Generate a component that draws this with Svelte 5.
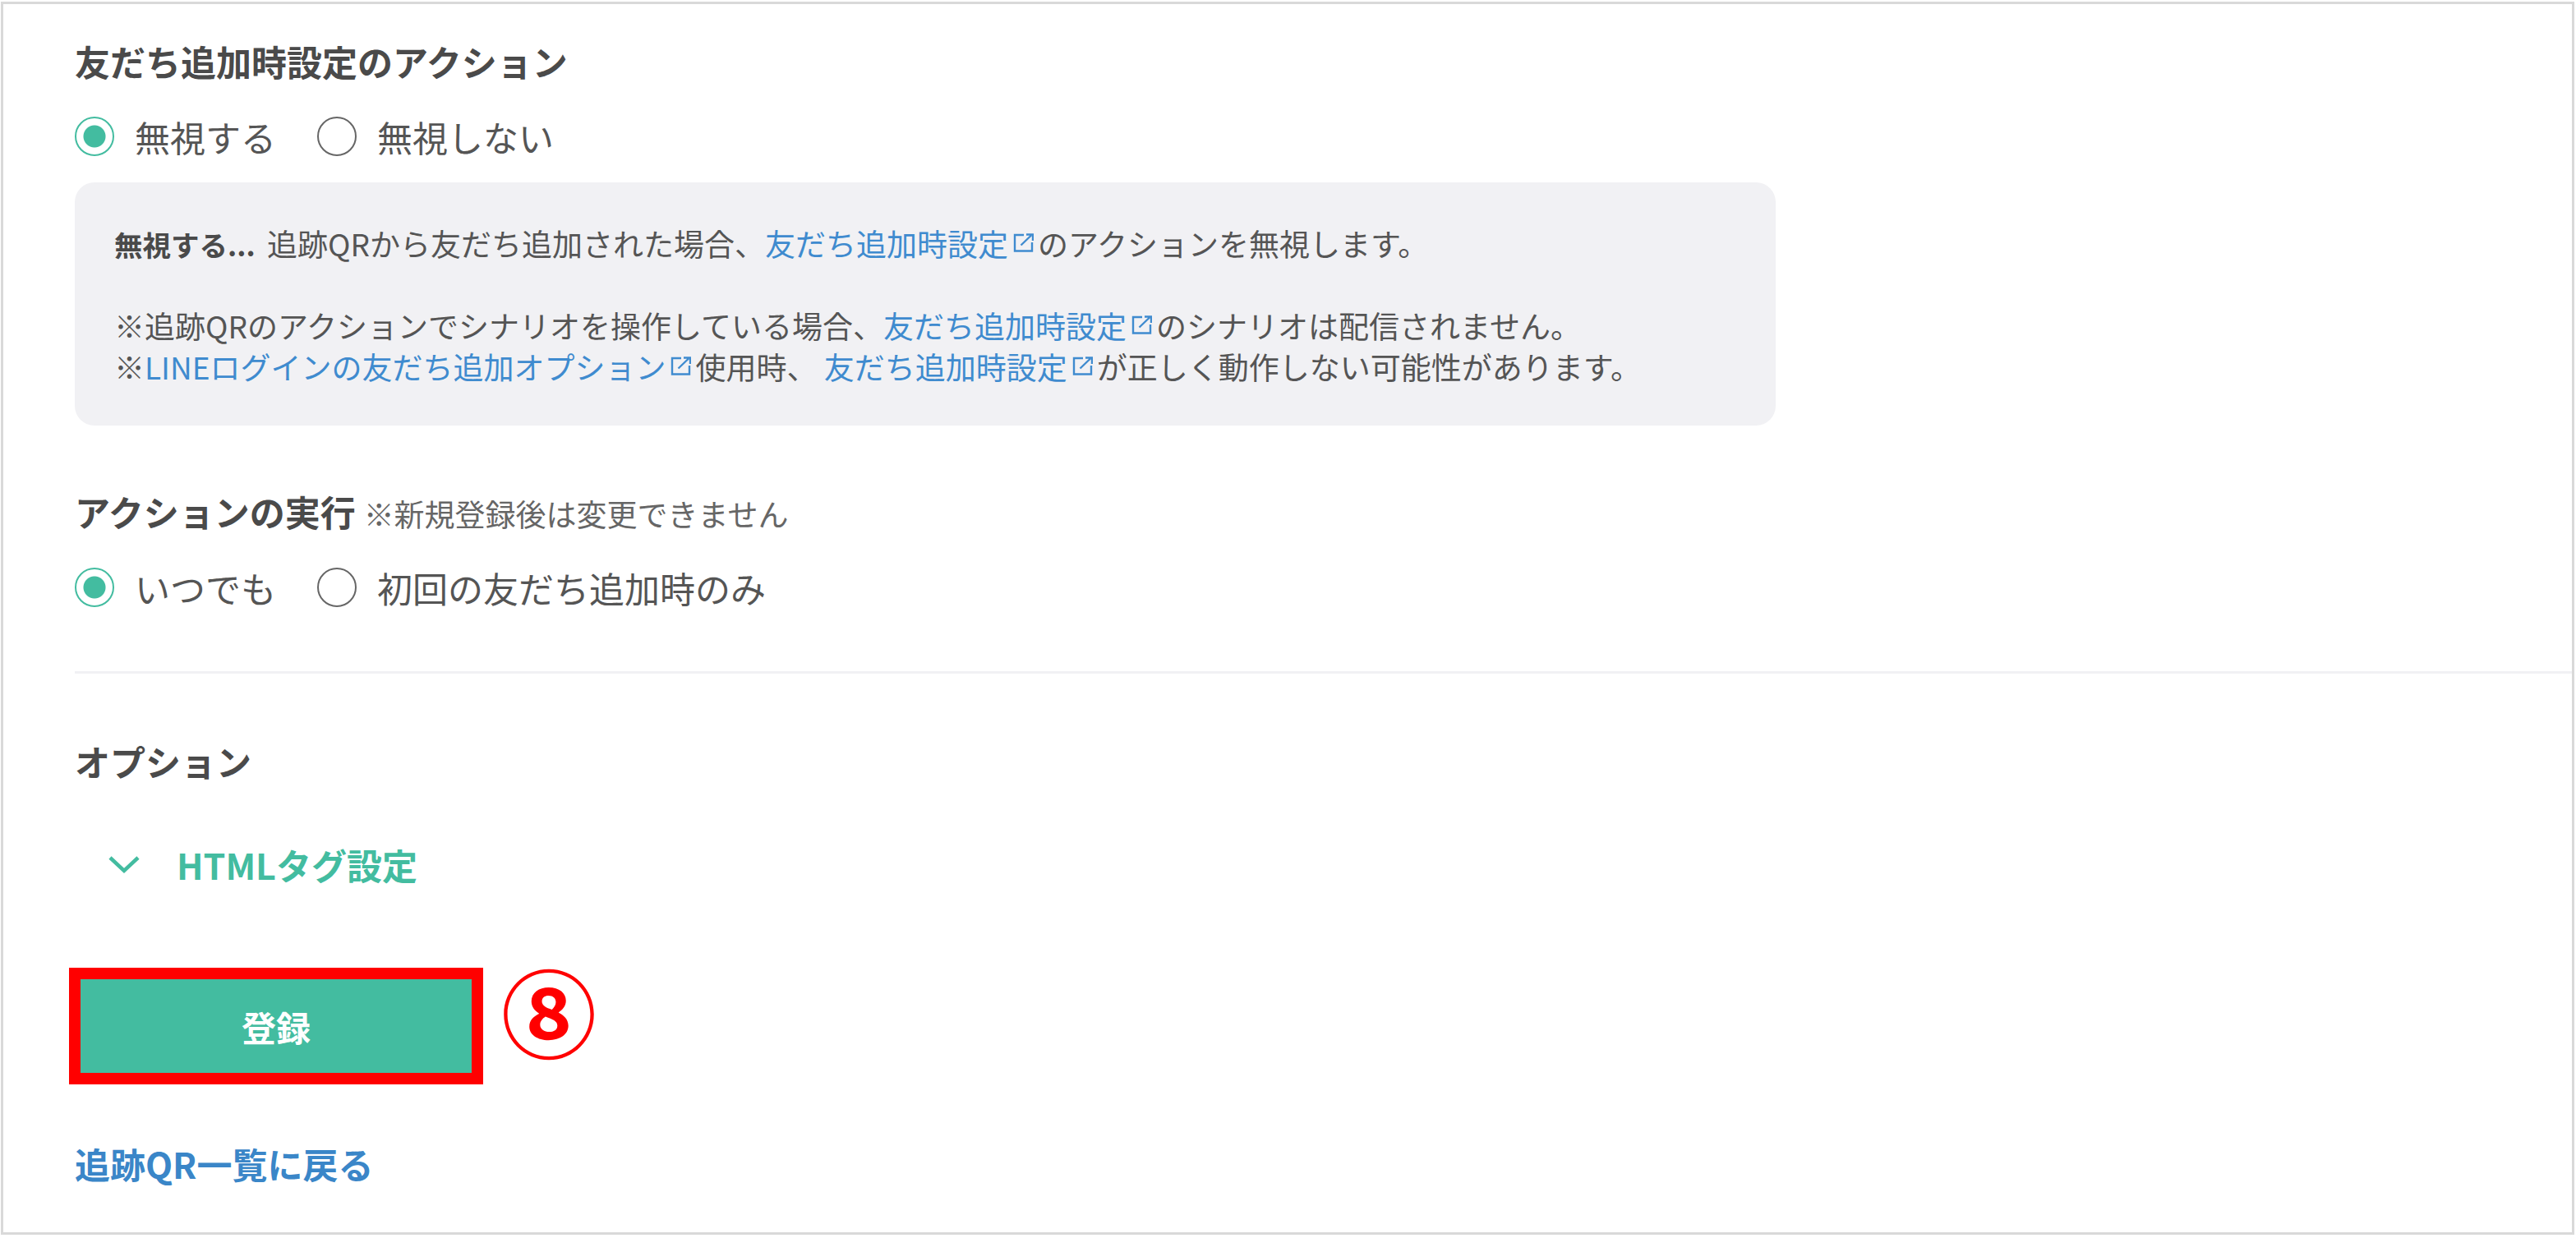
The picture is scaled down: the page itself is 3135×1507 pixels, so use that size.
<script lang="ts">
  let ignore = $state('ignore');
  let timing = $state('always');
  let htmlOpen = $state(false);

  const friendLink = '友だち追加時設定';
</script>

{#snippet ext()}
  <svg class="ext" viewBox="0 0 25 23" fill="none" stroke="currentColor" stroke-width="2.4">
    <path d="M13 2H2v19.5h21V11" />
    <path d="M9.5 14.5 22 2.5M16 1.5H24V9" />
  </svg>
{/snippet}

{#snippet radio(group, value, label)}
  <button type="button" class="radio" onclick={() => group(value)}>
    <span class="dot" class:on={label.checked}></span>
    <span>{label.text}</span>
  </button>
{/snippet}

<div class="frame">
  <h3 class="title">友だち追加時設定のアクション</h3>
  <div class="radios top">
    {@render radio((v) => (ignore = v), 'ignore', { text: '無視する', checked: ignore === 'ignore' })}
    {@render radio((v) => (ignore = v), 'keep', { text: '無視しない', checked: ignore === 'keep' })}
  </div>

  <div class="info">
    <p><strong>無視する...</strong> 追跡QRから友だち追加された場合、<a href="#top">{friendLink}{@render ext()}</a>のアクションを無視します。</p>
    <p class="notes">
      ※追跡QRのアクションでシナリオを操作している場合、<a href="#top">{friendLink}{@render ext()}</a>のシナリオは配信されません。<br />
      ※<a href="#top">LINEログインの友だち追加オプション{@render ext()}</a>使用時、 <a href="#top">{friendLink}{@render ext()}</a>が正しく動作しない可能性があります。
    </p>
  </div>

  <h3 class="title second">アクションの実行 <small>※新規登録後は変更できません</small></h3>
  <div class="radios">
    {@render radio((v) => (timing = v), 'always', { text: 'いつでも', checked: timing === 'always' })}
    {@render radio((v) => (timing = v), 'once', { text: '初回の友だち追加時のみ', checked: timing === 'once' })}
  </div>

  <hr />

  <h3 class="title option">オプション</h3>
  <button type="button" class="toggle" onclick={() => (htmlOpen = !htmlOpen)}>
    <svg viewBox="0 0 40 24" fill="none" stroke="currentColor" stroke-width="4.5">
      <path d="M3 4 20 20 37 4" />
    </svg>
    HTMLタグ設定
  </button>

  <div class="actions">
    <button type="button" class="submit">登録</button>
    <span class="step">⑧</span>
  </div>

  <a class="back" href="#top">追跡QR一覧に戻る</a>
</div>

<style>
  :global(body) {
    margin: 0;
    background: #fff;
  }

  .frame {
    box-sizing: border-box;
    width: 3132px;
    height: 1501px;
    margin: 2px 0 0 1px;
    padding: 39px 0 0 87px;
    border: 3px solid #d9d9d9;
    font-family: "Noto Sans CJK JP", "Noto Sans", sans-serif;
    color: #555;
    overflow: hidden;
  }

  .title {
    margin: 0;
    font-size: 43px;
    line-height: 60px;
    font-weight: 700;
    color: #4a4a4a;
  }

  .title small {
    font-size: 37px;
    font-weight: 400;
    color: #666;
  }

  .second {
    margin-top: 74px;
  }

  .option {
    margin-top: 76px;
  }

  .radios {
    display: flex;
    gap: 50px;
    margin-top: 36px;
  }

  .radios.top {
    margin-top: 38px;
  }

  .radio {
    display: flex;
    align-items: center;
    gap: 25px;
    height: 48px;
    padding: 0;
    border: 0;
    background: none;
    font: inherit;
    font-size: 43px;
    line-height: 44px;
    color: #555;
    cursor: pointer;
  }

  .dot {
    box-sizing: border-box;
    width: 48px;
    height: 48px;
    border: 2.5px solid #666;
    border-radius: 50%;
  }

  .dot.on {
    border-color: #43bca0;
    background: radial-gradient(circle, #43bca0 0 13px, #fff 14px);
  }

  .info {
    box-sizing: border-box;
    width: 2070px;
    height: 296px;
    margin-top: 32px;
    padding: 49px 48px 0;
    border-radius: 24px;
    background: #f1f1f4;
    font-size: 37px;
    line-height: 50px;
  }

  .info p {
    margin: 0;
  }

  .info strong {
    margin-right: 6px;
    font-size: 34.5px;
    color: #4a4a4a;
  }

  .notes {
    margin-top: 49px !important;
  }

  .info a {
    color: #3f8bcf;
    text-decoration: none;
  }

  .ext {
    width: 25px;
    height: 23px;
    margin: 0 5px 0 6px;
    vertical-align: 5px;
  }

  hr {
    height: 3px;
    margin: 78px 0 0;
    border: 0;
    background: #f1f1f4;
  }

  .toggle {
    display: flex;
    align-items: center;
    gap: 44px;
    height: 60px;
    margin-top: 66px;
    padding: 0 0 0 40px;
    border: 0;
    background: none;
    font: inherit;
    font-size: 43px;
    font-weight: 700;
    color: #43bca0;
    cursor: pointer;
  }

  .toggle svg {
    width: 40px;
    height: 24px;
  }

  .actions {
    display: flex;
    align-items: flex-start;
    gap: 22px;
    margin: 96px 0 0 -7px;
  }

  .submit {
    box-sizing: border-box;
    width: 504px;
    height: 142px;
    border: 14px solid #f00;
    background: #43bca0;
    font: inherit;
    font-size: 42px;
    font-weight: 700;
    color: #fff;
    cursor: pointer;
  }

  .step {
    font-size: 116px;
    line-height: 100px;
    font-weight: 700;
    color: #f00;
  }

  .back {
    display: block;
    width: fit-content;
    margin-top: 66px;
    font-size: 43px;
    line-height: 60px;
    font-weight: 700;
    color: #3a86c8;
    text-decoration: none;
  }
</style>
